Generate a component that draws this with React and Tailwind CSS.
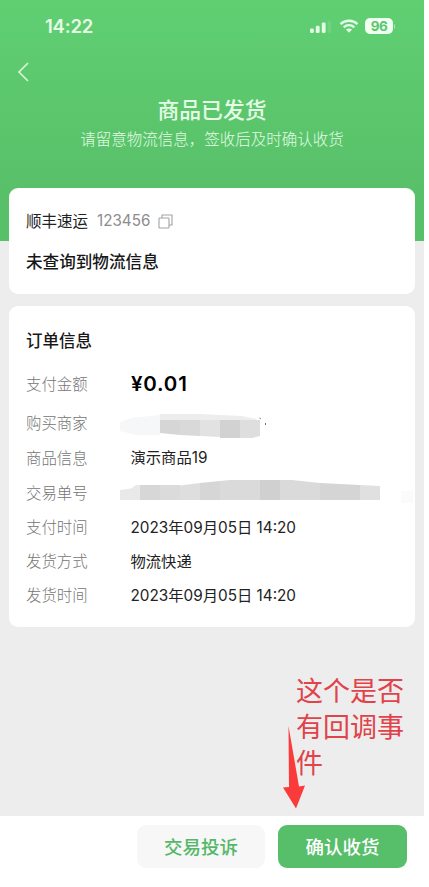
import React from 'react';

// Order detail rows; `mask` rows carry a redacted value
const orderRows = [
    { label: '购买商家', mask: 'merchant', height: 'h-[34px]' },
    { label: '商品信息', value: '演示商品19', height: 'h-[35px]' },
    { label: '交易单号', mask: 'trade', height: 'h-[35px]' },
    { label: '支付时间', value: '2023年09月05日 14:20', height: 'h-[34px]' },
    { label: '发货方式', value: '物流快递', height: 'h-[34px]' },
    { label: '发货时间', value: '2023年09月05日 14:20', height: 'h-[34px]' },
];

// Status Bar
function StatusBar() {
    return (
        <div className="flex h-[52px] items-center pl-[45px] pr-[29px]">
            <span className="pt-px text-[18.5px] font-semibold leading-none tracking-[-0.2px] text-[#e6fbe6]">14:22</span>
            <div className="ml-auto flex items-center">
                <svg className="mt-px h-[14px] w-[22px]" viewBox="0 0 22 14" fill="#e6fbe6">
                    <rect x="0" y="8.5" width="3.8" height="4.5" rx="1.2" />
                    <rect x="5.8" y="5.8" width="3.8" height="7.2" rx="1.2" />
                    <rect x="11.8" y="2.6" width="3.8" height="10.4" rx="1.2" />
                    <rect x="17.6" y="0.5" width="3.4" height="12.5" rx="1.2" opacity="0.12" />
                </svg>
                <svg className="ml-[7px] h-[14px] w-[20px]" viewBox="0 0 20 14" fill="none" stroke="#e6fbe6" strokeWidth="2.3">
                    <path d="M1.5 5.1C6.2.6 13.8.6 18.5 5.1" />
                    <path d="M4.7 8.300c3-2.800 7.600-2.800 10.600 0" />
                    <path d="M10 13.700 6.900 10.500c1.800-1.500 4.400-1.500 6.200 0Z" fill="#e6fbe6" stroke="none" />
                </svg>
                <div className="ml-[6px] flex h-4 w-[28px] items-center justify-center rounded-[5px] bg-[#effff0] pt-px text-[13.5px] font-bold leading-none tracking-[-0.4px] text-[#5bc56e]">
                    96
                </div>
                <div className="ml-px h-[5px] w-px rounded-r bg-[#a5e2ae]" />
            </div>
        </div>
    );
}

// Header
function Header() {
    return (
        <header className="h-[241px] bg-linear-to-b from-[#60cf72] to-[#58c069] to-80%">
            <StatusBar />
            <div className="flex h-10 items-center pl-[17px]">
                <svg className="h-5 w-3" viewBox="0 0 12 20" fill="none" stroke="#d9f7dc" strokeWidth="1.6">
                    <path d="M11 1 2 10l9 9" />
                </svg>
            </div>
            <div className="flex flex-col items-center text-[#e4fbe6]">
                <h1 className="mt-[2px] text-[21.8px] font-medium leading-8">商品已发货</h1>
                <p className="mt-[3px] text-[15.5px] font-light leading-[22px]">请留意物流信息，签收后及时确认收货</p>
            </div>
        </header>
    );
}

// Pixelated block over the merchant name
function MerchantMask() {
    return (
        <svg className="-ml-[11px] mt-[2px] h-7 w-[148px]" viewBox="0 0 148 28">
            <path d="M0 11 12 7l28-3v20H16L0 20Z" fill="#f5f7f8" />
            <path d="M40 3h40l20 1 22 1 14 3v1H40Z" fill="#ededed" />
            <path d="M40 9h20v15l-20-2Z" fill="#d6d6d6" />
            <path d="M60 9h20v16l-20-1Z" fill="#d9d9d9" />
            <path d="M80 9h20v17l-20-1Z" fill="#e2e2e2" />
            <path d="M100 9h20v18h-20Z" fill="#d2d2d2" />
            <path d="M120 9h20v16l-8 2h-12Z" fill="#dedede" />
            <path d="m139.500 7 1.300.7M145.500 12v2" stroke="#777" />
        </svg>
    );
}

// Pixelated block over the trade number
function TradeMask() {
    return (
        <svg className="-ml-[11px] -mt-[2px] h-[28px] w-[294px] shrink-0" viewBox="0 0 294 28">
            <path d="M0 11 11 9.500 16 6h4v15H0Z" fill="#e9e9e9" />
            <path d="M20 6h20v15H20Z" fill="#d7d7d7" />
            <path d="M40 6h20v15H40Z" fill="#dbdbdb" />
            <path d="M60 6.500 80 4v17H60Z" fill="#dedede" />
            <path d="m80 4 20-2v19H80Z" fill="#d6d6d6" />
            <path d="m100 2 10-1h30v20h-40Z" fill="#dadada" />
            <path d="M140 1h20v20h-20Z" fill="#d0d0d0" />
            <path d="M160 1h12l28 3v17h-40Z" fill="#dadada" />
            <path d="m200 4 40 2v15h-40Z" fill="#d5d5d5" />
            <path d="m240 6 20 1v14h-20Z" fill="#e0e0e0" />
            <path d="M281 12h12v12h-12Z" fill="#fbfbfb" />
        </svg>
    );
}

// Logistics Card
function LogisticsCard() {
    return (
        <section className="h-[106px] rounded-[9px] bg-white px-[17px] pt-[17px]">
            <div className="flex h-8 items-center">
                <span className="pt-[2px] text-[15.5px] text-[#222]">顺丰速运</span>
                <span className="ml-[9px] text-[15.2px] text-[#8c8c8c]">123456</span>
                <svg className="ml-2 h-[15px] w-[15px]" viewBox="0 0 15 15" fill="none" stroke="#a3a3a3" strokeWidth="1.1">
                    <rect x="1" y="4" width="10" height="10" rx="0.8" />
                    <path d="M4 4V1h10v10h-3" />
                </svg>
            </div>
            <h2 className="mt-[9px] text-[16.6px] font-medium leading-8 text-[#171717]">未查询到物流信息</h2>
        </section>
    );
}

// Order Info Card
function OrderCard() {
    return (
        <section className="mt-[12px] h-[321px] rounded-[9px] bg-white px-[17px] pt-[19px]">
            <h2 className="text-[16.5px] font-medium leading-8 text-[#171717]">订单信息</h2>
            <div className="mt-[5px] flex h-11 items-center">
                <span className="w-[105px] pt-[2px] text-[15.4px] font-light text-[#757575]">支付金额</span>
                <span className="text-[20.5px] font-semibold tracking-[0.8px] text-black">¥0.01</span>
            </div>
            {orderRows.map(({ label, value, mask, height }) => (
                <div key={label} className={`flex items-center pt-[2px] ${height}`}>
                    <span className="w-[105px] shrink-0 text-[15.4px] font-light text-[#757575]">{label}</span>
                    {mask === 'merchant' && <MerchantMask />}
                    {mask === 'trade' && <TradeMask />}
                    {value && <span className="-ml-[0.5px] whitespace-nowrap text-[15.3px] text-[#222]">{value}</span>}
                </div>
            ))}
        </section>
    );
}

// Red note pointing at the confirm button
function Annotation() {
    return (
        <div className="absolute left-[283px] top-[673px] flex">
            <p className="ml-[13px] w-[110px] pt-px text-[27px] leading-[36px] text-[#e0434a]">这个是否有回调事件</p>
            <svg className="absolute left-0 top-[53px] h-[83px] w-[22px]" viewBox="0 0 22 83" fill="#fb3a3c">
                <path d="M5.5 0 16 60.5 22 59.5 13 82.5 0 61.5 6 61Z" />
            </svg>
        </div>
    );
}

// Bottom Actions
function ActionBar() {
    return (
        <footer className="flex h-[71px] justify-end gap-[13px] bg-white pr-[17px] pt-[9px]">
            <button className="h-[43px] w-[128px] rounded-[9px] bg-[#f7f7f7] pt-[2px] text-[18.5px] font-medium text-[#55b768]">
                交易投诉
            </button>
            <button className="h-[43px] w-[129px] rounded-[9px] bg-[#57be6a] pt-[2px] text-[18.5px] font-medium text-white">
                确认收货
            </button>
        </footer>
    );
}

// Main App
function App() {
    return (
        <div className="h-[887px] overflow-hidden bg-white font-['Inter','Noto_Sans_CJK_SC',sans-serif]">
            <div className="relative flex h-full w-[424px] flex-col bg-[#ededed]">
                <Header />
                <main className="-mt-[53px] flex-1 px-[9px]">
                    <LogisticsCard />
                    <OrderCard />
                </main>
                <ActionBar />
                <Annotation />
            </div>
        </div>
    );
}

export default App;
